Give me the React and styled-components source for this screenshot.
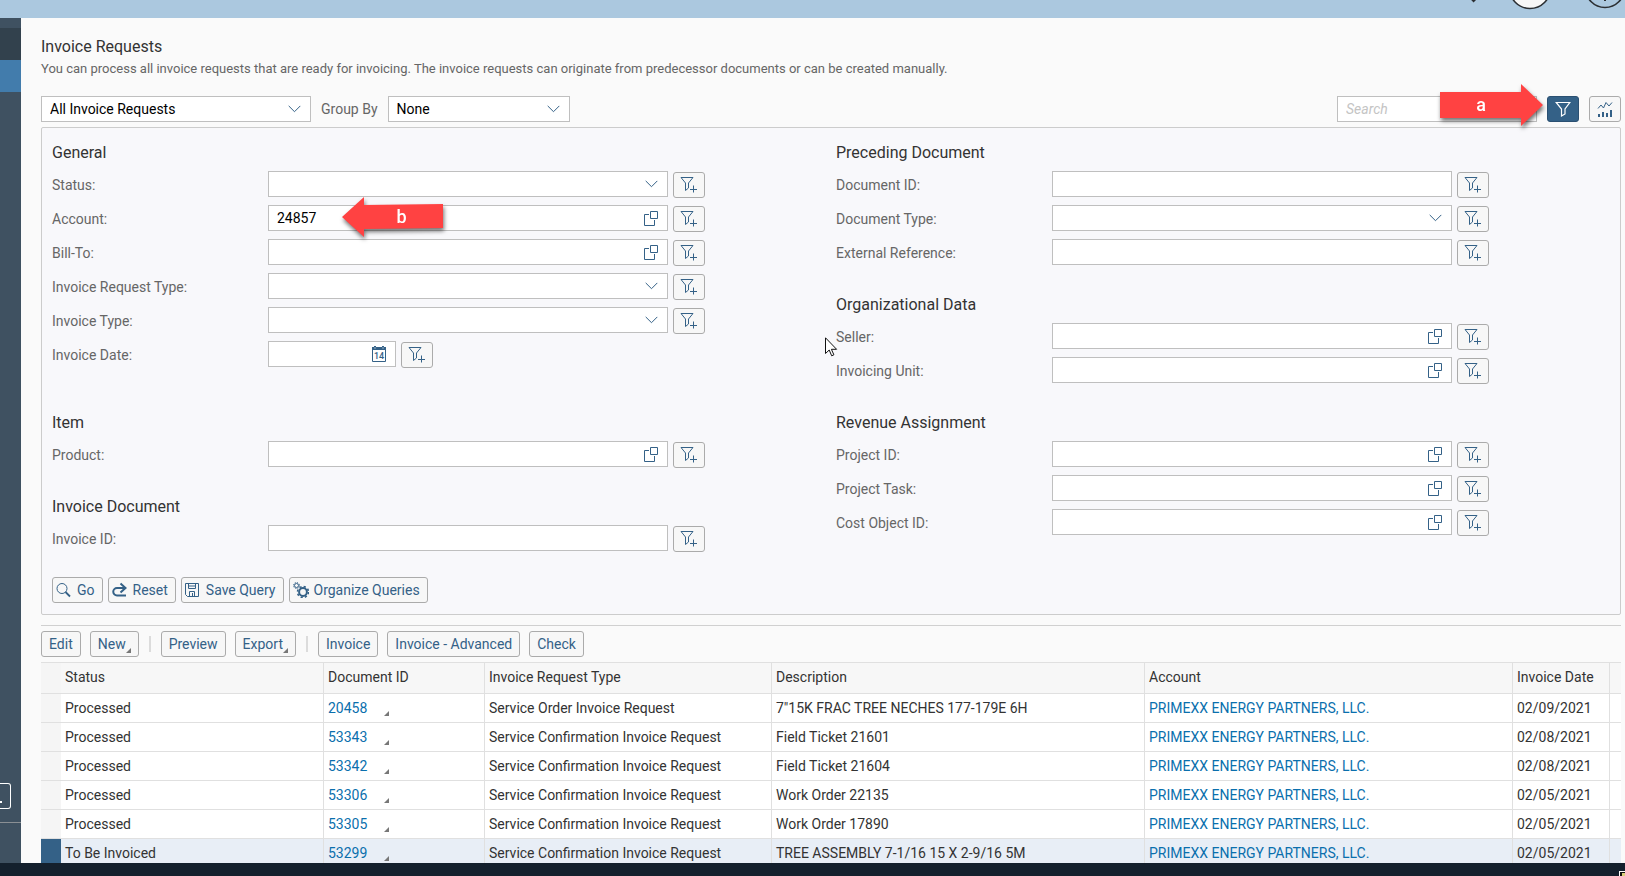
import React from 'react'
import styled, { createGlobalStyle } from 'styled-components'

const GlobalStyle = createGlobalStyle`
    * {
        box-sizing: border-box;
    }
    body {
        margin: 0;
        font-family: Roboto, "Liberation Sans", sans-serif;
        font-size: 14px;
        color: #333;
        background-color: #fafafa;
    }
    button, input, select {
        font-family: inherit;
        font-size: 14px;
    }
`
const Page = styled.div`
    display: flex;
    flex-direction: column;
    height: 100vh;
    overflow: hidden;
`
const TopBar = styled.header`
    display: flex;
    justify-content: flex-end;
    flex: none;
    height: 18px;
    background-color: #abc8df;
`
const Body = styled.div`
    flex: 1;
    display: flex;
    min-height: 0;
`
const Sidebar = styled.nav`
    flex: none;
    display: flex;
    flex-direction: column;
    width: 21px;
    padding-top: 10px;
    background-color: #3f5161;
`
const SideItem = styled.div`
    height: 32px;
    background-color: ${p => p.$active ? '#427cac' : '#32414d'};
`
const SideFooter = styled.div`
    margin-top: auto;
    height: 80px;
`
const SideButton = styled.button`
    display: flex;
    align-items: flex-end;
    width: 11px;
    height: 26px;
    padding: 0 0 5px;
    border: 1px solid #fff;
    border-left: none;
    border-radius: 0 3px 3px 0;
    background: none;
`
const SideLine = styled.div`
    height: 1px;
    margin-top: 13px;
    background-color: #8a8f94;
`
const Main = styled.main`
    flex: 1;
    min-width: 0;
    padding: 19px 4px 0 20px;
    overflow: hidden;
`
const Title = styled.h1`
    margin: 0 0 2px;
    font-size: 16px;
    font-weight: 400;
    line-height: 20px;
`
const Desc = styled.p`
    margin: 0 0 17px;
    font-size: 13px;
    line-height: 20px;
    color: #666;
`
const Toolbar = styled.div`
    display: flex;
    align-items: center;
    gap: 10px;
    margin-bottom: 5px;
`
const Spacer = styled.div`
    flex: 1;
`
const Label = styled.label`
    color: #666;
`
const Box = styled.div`
    position: relative;
    display: grid;
    flex: none;
    width: ${p => p.$width}px;
    height: 26px;
    border: 1px solid #bfbfbf;
    background-color: #fff;
`
const Select = styled.select`
    grid-area: 1 / 1;
    width: 100%;
    padding: 0 8px;
    border: none;
    appearance: none;
    background: transparent;
    color: #000;
`
const Input = styled.input`
    grid-area: 1 / 1;
    width: 100%;
    min-width: 0;
    padding: 0 8px;
    border: none;
    background: transparent;
    color: #000;
    &::placeholder {
        color: #c4c4c4;
        font-style: italic;
    }
`
const Adornment = styled.span`
    grid-area: 1 / 1;
    align-self: center;
    justify-self: end;
    display: flex;
    margin-right: 9px;
    pointer-events: none;
`
const HelpButton = styled.button`
    grid-area: 1 / 1;
    align-self: center;
    justify-self: end;
    display: flex;
    margin-right: 8px;
    padding: 0;
    border: none;
    background: none;
`
const Button = styled.button`
    display: flex;
    align-items: center;
    justify-content: center;
    gap: ${p => p.$icon ? 5 : 0}px;
    height: 26px;
    padding: ${p => p.$icon ? '0 7px 0 3px' : '0 7px'};
    border: 1px solid #ababab;
    border-radius: 3px;
    background-color: #f7f7f7;
    color: #346187;
    white-space: nowrap;
`
const IconButton = styled(Button)`
    flex: none;
    width: 32px;
    padding: 0;
    border-color: ${p => p.$pressed ? '#2b5072' : '#ababab'};
    background-color: ${p => p.$pressed ? '#346187' : '#f7f7f7'};
`
const Panel = styled.form`
    padding: 15px 0 11px 10px;
    border: 1px solid #ccc;
    border-radius: 2px;
    background-color: #f8f8fb;
`
const Groups = styled.div`
    display: grid;
    grid-template-columns: 1fr 1fr;
    row-gap: 29px;
`
const GroupColumn = styled.div`
    display: flex;
    flex-direction: column;
    gap: 29px;
`
const Section = styled.section`
    position: relative;
    display: flex;
    flex-direction: column;
    gap: 7px;
`
const SectionTitle = styled.h2`
    margin: 0 0 1px;
    font-size: 16px;
    font-weight: 400;
    line-height: 20px;
`
const FieldRow = styled.div`
    display: flex;
    height: 27px;
    line-height: 28px;
    ${Label} {
        flex: none;
        width: 216px;
    }
    ${IconButton} {
        margin: 1px 0 0 5px;
    }
`
const Actions = styled.div`
    display: flex;
    gap: 5px;
    margin-top: 25px;
`
const TableBar = styled.div`
    display: flex;
    align-items: center;
    gap: 9px;
    margin-top: 10px;
    padding: 5px 0;
    border-top: 1px solid #d0d0d0;
`
const Separator = styled.div`
    width: 2px;
    height: 16px;
    margin: 0 1px;
    background-color: #dcdcdc;
`
const Table = styled.table`
    width: 100%;
    table-layout: fixed;
    border-spacing: 0;
    border-top: 1px solid #e0e0e0;
    background-color: #fff;
`
const Cell = styled.td`
    height: 29px;
    padding: 0 4px;
    border-right: 1px solid #e0e0e0;
    border-bottom: 1px solid #e0e0e0;
    overflow: hidden;
    white-space: nowrap;
    &:last-child {
        border-right: none;
    }
`
const HeadRow = styled.tr`
    background-color: #f7f7f7;
    ${Cell} {
        height: 31px;
        padding-bottom: 2px;
        font-weight: 400;
        text-align: left;
    }
`
const Gutter = styled(Cell)`
    border-right: none;
    background-color: ${p => p.$selected ? '#346187' : '#f5f5f5'};
`
const Row = styled.tr`
    background-color: ${p => p.$selected ? '#e8eef6' : '#fff'};
`
const Link = styled.a`
    color: #0a6fad;
    text-decoration: none;
`
const DocCell = styled.div`
    display: flex;
    align-items: flex-end;
    ${Link} {
        width: 56px;
    }
`
const CornerSlot = styled.span`
    display: flex;
    align-self: flex-end;
    margin-bottom: 3px;
`
const BottomBar = styled.footer`
    display: flex;
    flex: none;
    align-items: flex-end;
    justify-content: flex-end;
    height: 13px;
    background-color: #14202d;
`
const Callout = styled.div`
    position: absolute;
    z-index: 1;
    left: ${p => p.$left}px;
    top: ${p => p.$top}px;
    display: grid;
    align-items: center;
    filter: drop-shadow(1px 3px 2px rgba(0, 0, 0, 0.55));
    pointer-events: none;
    svg, span {
        grid-area: 1 / 1;
    }
    span {
        padding: ${p => p.$right ? '0 22px 0 0' : '0 0 0 18px'};
        color: #fff;
        font-size: 18px;
        font-weight: 500;
        line-height: 20px;
        text-align: center;
    }
`
const Pointer = styled.svg`
    position: absolute;
    left: -11px;
    top: 42px;
`

const blue = '#346187'

const Chevron = () => (
  <svg width="13" height="8" viewBox="0 0 13 8" fill="none" stroke={blue}>
    <path d="M.7 .9 6.5 6.7 12.3 .9" />
  </svg>
)
const ValueHelp = () => (
  <svg width="15" height="15" viewBox="0 0 15 15" fill="none" stroke={blue}>
    <path d="M6.5 .5h7v7h-7zM5 3.5H.5v11h10V9" />
  </svg>
)
const Calendar = () => (
  <svg width="15" height="16" viewBox="0 0 15 16">
    <path d="M.5 3v12.5h13V3" fill="#fff" stroke={blue} />
    <path d="M0 1h2V0h2v1h6V0h2v1h2v3H0z" fill={blue} />
    <path d="M3 1.5v1M11 1.5v1" stroke="#fff" />
    <text x="7" y="13" fontSize="9" fontWeight="500" textAnchor="middle" fill={blue}>14</text>
  </svg>
)
const FilterAdd = () => (
  <svg width="18" height="16" viewBox="0 0 18 16" fill="none" stroke={blue}>
    <path d="M1 .5h12L8.5 6v5L5.5 13.5V6z" />
    <path d="M13.5 8.5v7M10 12.5h7" />
  </svg>
)
const Filter = () => (
  <svg width="16" height="16" viewBox="0 0 16 16" fill="none" stroke="#fff" strokeWidth="1.2">
    <path d="M1.2 1.5h13.6L10 8v5l-3.500 2V8z" />
  </svg>
)
const Chart = () => (
  <svg width="16" height="16" viewBox="0 0 16 16" fill="none" stroke={blue}>
    <path d="M1 7.5 4 4l2.500 3L9 1.500 12 5l3-3.500" />
    <path d="M2 13v3M6 11v5M10 12v4M14 9v7" strokeWidth="2" />
  </svg>
)
const Magnifier = () => (
  <svg width="16" height="16" viewBox="0 0 16 16" fill="none" stroke={blue}>
    <circle cx="6" cy="6.5" r="5" />
    <path d="m9.500 10 4.500 4.500" strokeWidth="1.8" />
  </svg>
)
const ResetIcon = () => (
  <svg width="16" height="16" viewBox="0 0 16 16" fill="none" stroke={blue} strokeWidth="2">
    <path d="M12.5 6H5a3.500 3.500 0 0 0 0 7.500h9" />
    <path d="m8.500 1.500 5 4.500-5 4.500" />
  </svg>
)
const SaveIcon = () => (
  <svg width="16" height="16" viewBox="0 0 16 16" fill="none" stroke={blue}>
    <path d="M.5 1.500h13v13h-11l-2-2z" />
    <path d="M3.500 1.500v5h7v-5M4.500 14.500v-5h5v5M7.500 11v3.500M3.500 4h7" />
  </svg>
)
const Gears = () => (
  <svg width="16" height="16" viewBox="0 0 16 16" fill="none" stroke={blue}>
    <circle cx="3.500" cy="3.500" r="2" />
    <circle cx="3.500" cy="3.500" r="3" strokeDasharray="1.200 1.156" />
    <circle cx="10" cy="10" r="3.900" strokeWidth="2" />
    <circle cx="10" cy="10" r="5.500" strokeWidth="1.600" strokeDasharray="2.160 2.160" />
  </svg>
)
const Corner = () => (
  <svg width="5" height="5" viewBox="0 0 5 5">
    <path d="M5 0v5H0z" fill="#777" />
  </svg>
)
const RightArrow = () => (
  <svg width="104" height="42" viewBox="0 0 104 42">
    <path d="M0 8h81V0l22 21-22 21v-8H0z" fill="#ff4242" />
  </svg>
)
const LeftArrow = () => (
  <svg width="101" height="40" viewBox="0 0 101 40">
    <path d="M0 20 22 0v8l79-1v24l-79 1v8z" fill="#ff4242" />
  </svg>
)

const Field = ({ label, kind, value, width = 400, children }) => {
  const id = label.toLowerCase().replace(/[^a-z]+/g, '-')
  return (
    <FieldRow>
      <Label htmlFor={id}>{label}:</Label>
      <Box $width={width}>
        {kind === 'select' ? (
          <>
            <Select id={id} />
            <Adornment><Chevron /></Adornment>
          </>
        ) : (
          <Input id={id} defaultValue={value} />
        )}
        {kind === 'help' && <HelpButton type="button" aria-label={`Select ${label}`}><ValueHelp /></HelpButton>}
        {kind === 'date' && <HelpButton type="button" aria-label="Open calendar"><Calendar /></HelpButton>}
        {children}
      </Box>
      <IconButton type="button" aria-label={`Add ${label} filter`}><FilterAdd /></IconButton>
    </FieldRow>
  )
}

const columns = [
  ['Status', 263],
  ['Document ID', 161],
  ['Invoice Request Type', 287],
  ['Description', 373],
  ['Account', 368],
  ['Invoice Date', 97],
]
const rows = [
  ['Processed', '20458', 'Service Order Invoice Request', '7"15K FRAC TREE NECHES 177-179E 6H', '02/09/2021'],
  ['Processed', '53343', 'Service Confirmation Invoice Request', 'Field Ticket 21601', '02/08/2021'],
  ['Processed', '53342', 'Service Confirmation Invoice Request', 'Field Ticket 21604', '02/08/2021'],
  ['Processed', '53306', 'Service Confirmation Invoice Request', 'Work Order 22135', '02/05/2021'],
  ['Processed', '53305', 'Service Confirmation Invoice Request', 'Work Order 17890', '02/05/2021'],
  ['To Be Invoiced', '53299', 'Service Confirmation Invoice Request', 'TREE ASSEMBLY 7-1/16 15 X 2-9/16 5M', '02/05/2021'],
]

const App = () => {
  return (
    <Page>
      <GlobalStyle />
      <TopBar>
        <svg width="165" height="18" viewBox="0 0 165 18" fill="none" stroke="#2b2f33" strokeWidth="1.6">
          <path d="m10 -4 5 5" strokeWidth="4" />
          <circle cx="70" cy="-12" r="20.5" fill="#f7f7f7" />
          <circle cx="145" cy="-12" r="19.5" />
          <path d="M145 -3v4" strokeWidth="2" />
        </svg>
      </TopBar>
      <Body>
        <Sidebar>
          <SideItem />
          <SideItem $active />
          <SideFooter>
            <SideButton aria-label="Expand">
              <svg width="2" height="2"><path d="M0 0h2v2H0z" fill="#fff" /></svg>
            </SideButton>
            <SideLine />
          </SideFooter>
        </Sidebar>
        <Main>
          <Title>Invoice Requests</Title>
          <Desc>You can process all invoice requests that are ready for invoicing. The invoice requests can originate from predecessor documents or can be created manually.</Desc>
          <Toolbar>
            <Box $width={270}>
              <Select aria-label="Query"><option>All Invoice Requests</option></Select>
              <Adornment><Chevron /></Adornment>
            </Box>
            <Label htmlFor="group-by">Group By</Label>
            <Box $width={182}>
              <Select id="group-by"><option>None</option></Select>
              <Adornment><Chevron /></Adornment>
            </Box>
            <Spacer />
            <Box $width={200}>
              <Input type="text" placeholder="Search" aria-label="Search" />
              <Callout $right $left={102} $top={-13}>
                <RightArrow />
                <span>a</span>
              </Callout>
            </Box>
            <IconButton $pressed aria-label="Filter"><Filter /></IconButton>
            <IconButton aria-label="Chart"><Chart /></IconButton>
          </Toolbar>
          <Panel>
            <Groups>
              <Section>
                <SectionTitle>General</SectionTitle>
                <Field label="Status" kind="select" />
                <Field label="Account" kind="help" value="24857">
                  <Callout $left={73} $top={-9}>
                    <LeftArrow />
                    <span>b</span>
                  </Callout>
                </Field>
                <Field label="Bill-To" kind="help" />
                <Field label="Invoice Request Type" kind="select" />
                <Field label="Invoice Type" kind="select" />
                <Field label="Invoice Date" kind="date" width={128} />
              </Section>
              <GroupColumn>
                <Section>
                  <SectionTitle>Preceding Document</SectionTitle>
                  <Field label="Document ID" />
                  <Field label="Document Type" kind="select" />
                  <Field label="External Reference" />
                </Section>
                <Section>
                  <SectionTitle>Organizational Data</SectionTitle>
                  <Field label="Seller" kind="help" />
                  <Field label="Invoicing Unit" kind="help" />
                  <Pointer width="13" height="20" viewBox="0 0 13 20">
                    <path d="M.5 .8v15.700l3.700-3.500 2.500 5.800 2.200-1-2.500-5.500h5.200z" fill="#fff" stroke="#111" />
                  </Pointer>
                </Section>
              </GroupColumn>
              <GroupColumn>
                <Section>
                  <SectionTitle>Item</SectionTitle>
                  <Field label="Product" kind="help" />
                </Section>
                <Section>
                  <SectionTitle>Invoice Document</SectionTitle>
                  <Field label="Invoice ID" />
                </Section>
              </GroupColumn>
              <Section>
                <SectionTitle>Revenue Assignment</SectionTitle>
                <Field label="Project ID" kind="help" />
                <Field label="Project Task" kind="help" />
                <Field label="Cost Object ID" kind="help" />
              </Section>
            </Groups>
            <Actions>
              <Button type="button" $icon><Magnifier />Go</Button>
              <Button type="button" $icon><ResetIcon />Reset</Button>
              <Button type="button" $icon><SaveIcon />Save Query</Button>
              <Button type="button" $icon><Gears />Organize Queries</Button>
            </Actions>
          </Panel>
          <TableBar>
            <Button>Edit</Button>
            <Button>New<CornerSlot><Corner /></CornerSlot></Button>
            <Separator />
            <Button>Preview</Button>
            <Button>Export<CornerSlot><Corner /></CornerSlot></Button>
            <Separator />
            <Button>Invoice</Button>
            <Button>Invoice - Advanced</Button>
            <Button>Check</Button>
          </TableBar>
          <Table>
            <colgroup>
              <col width="20" />
              {columns.map(([name, width]) => <col key={name} width={width} />)}
              <col width="11" />
            </colgroup>
            <thead>
              <HeadRow>
                <Gutter />
                {columns.map(([name]) => <Cell as="th" key={name}>{name}</Cell>)}
                <Cell />
              </HeadRow>
            </thead>
            <tbody>
              {rows.map(([status, doc, type, desc, date]) => {
                const selected = status === 'To Be Invoiced'
                return (
                  <Row key={doc} $selected={selected}>
                    <Gutter $selected={selected} />
                    <Cell>{status}</Cell>
                    <Cell>
                      <DocCell>
                        <Link href="#">{doc}</Link>
                        <Corner />
                      </DocCell>
                    </Cell>
                    <Cell>{type}</Cell>
                    <Cell>{desc}</Cell>
                    <Cell><Link href="#">PRIMEXX ENERGY PARTNERS, LLC.</Link></Cell>
                    <Cell>{date}</Cell>
                    <Cell />
                  </Row>
                )
              })}
            </tbody>
          </Table>
        </Main>
      </Body>
      <BottomBar>
        <svg width="6" height="5" viewBox="0 0 6 5">
          <path d="M0 0h6v5H0z" fill="#fff" />
          <path d="M1 1h5v4H1z" fill="#111" />
          <path d="M3 2h3v3H3z" fill="#d8d07a" />
        </svg>
      </BottomBar>
    </Page>
  )
}

export default App
